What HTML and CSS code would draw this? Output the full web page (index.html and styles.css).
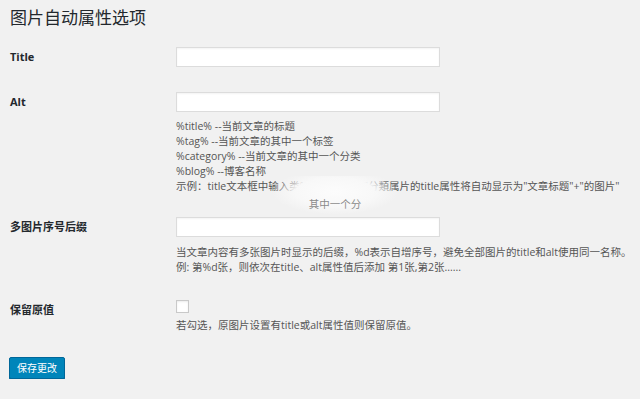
FILE: index.html
```html
<!DOCTYPE html>
<html lang="zh-CN">
<head>
    <meta charset="UTF-8">
    <title>图片自动属性选项</title>
    <link rel="stylesheet" href="styles.css">
</head>
<body>
    <div class="wrap">
        <h1>图片自动属性选项</h1>

        <form class="form-table">
            <!-- Title -->
            <div class="row">
                <div class="label">Title</div>
                <div class="field">
                    <input type="text" class="text-input">
                </div>
            </div>

            <!-- Alt -->
            <div class="row row-alt">
                <div class="label">Alt</div>
                <div class="field">
                    <input type="text" class="text-input">
                    <div class="desc alt-desc">
                        <div>%title% --当前文章的标题</div>
                        <div>%tag% --当前文章的其中一个标签</div>
                        <div>%category% --当前文章的其中一个分类</div>
                        <div>%blog% --博客名称</div>
                        <div>示例：title文本框中输入类%tag%其甲竺"分類属片的title属性将自动显示为"文章标题"+"的图片"</div>
                        <!-- 提示框淡出的残影 -->
                        <div class="fade-tip">其中一个分</div>
                    </div>
                </div>
            </div>

            <!-- 多图片序号后缀 -->
            <div class="row">
                <div class="label">多图片序号后缀</div>
                <div class="field">
                    <input type="text" class="text-input">
                    <div class="desc">
                        <div>当文章内容有多张图片时显示的后缀，%d表示自增序号，避免全部图片的title和alt使用同一名称。</div>
                        <div>例: 第%d张，则依次在title、alt属性值后添加 第1张,第2张......</div>
                    </div>
                </div>
            </div>

            <!-- 保留原值 -->
            <div class="row">
                <div class="label">保留原值</div>
                <div class="field">
                    <span class="checkbox"></span>
                    <div class="desc check-desc">若勾选，原图片设置有title或alt属性值则保留原值。</div>
                </div>
            </div>

            <button type="button" class="button-primary">保存更改</button>
        </form>
    </div>
</body>
</html>
```

FILE: styles.css
```css
body {
    margin: 0;
    background-color: #f1f1f1;
    color: #23282d;
    font-family: "Open Sans", "Noto Sans CJK SC", sans-serif;
    font-size: 11px;
    overflow: hidden;
}

.wrap {
    padding-left: 10px;
}

h1 {
    margin: 0;
    padding-top: 6px;
    font-size: 17px;
    font-weight: 400;
    line-height: 24px;
    color: #23282d;
}

.form-table {
    margin-top: 4px;
}

.row {
    display: grid;
    grid-template-columns: 166px 1fr;
    padding: 13px 0 12px;
}

.row-alt {
    padding-bottom: 10px;
}

.label {
    font-weight: 700;
    line-height: 20px;
}

.field {
    display: flex;
    flex-direction: column;
    align-items: flex-start;
}

.text-input {
    box-sizing: border-box;
    width: 264px;
    height: 20px;
    margin: 0;
    border: 1px solid #dcdcdc;
    background: #fff;
    box-shadow: inset 0 1px 2px rgba(0, 0, 0, 0.05);
}

.desc {
    margin-top: 8px;
    color: #555;
    font-size: 10.5px;
    line-height: 15px;
    white-space: nowrap;
}

.alt-desc {
    margin-top: 7px;
    position: relative;
}

.check-desc {
    margin-top: 5px;
}

/* 淡出的提示框 */
.fade-tip {
    position: absolute;
    left: 97px;
    top: 57px;
    width: 124px;
    height: 38px;
    padding-top: 21px;
    box-sizing: border-box;
    text-align: center;
    color: #8a8a8a;
    background: radial-gradient(ellipse at 50% 42%, #fcfcfc 0%, #f8f8f8 45%, rgba(241, 241, 241, 0) 72%);
}

.checkbox {
    display: block;
    width: 11px;
    height: 11px;
    border: 1px solid #c9c9c9;
    background: #fff;
    box-shadow: inset 0 1px 2px rgba(0, 0, 0, 0.08);
}

.button-primary {
    margin-top: 12px;
    margin-left: -1px;
    height: 22px;
    padding: 0 7px;
    border: 1px solid #006799;
    border-radius: 2px;
    background-color: #0085ba;
    color: #fff;
    font-family: "Noto Sans CJK SC", sans-serif;
    font-size: 10px;
    line-height: 20px;
    box-shadow: 0 1px 0 #006799;
}
```
